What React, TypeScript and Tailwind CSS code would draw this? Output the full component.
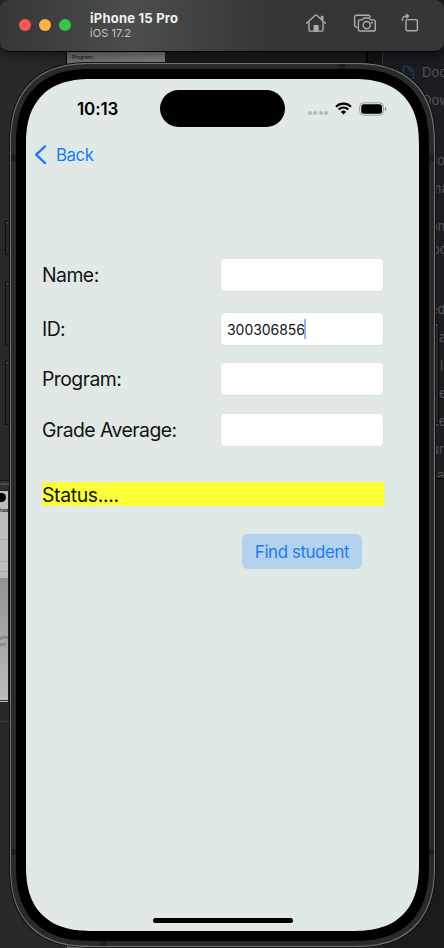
import React from "react";

const Dot = ({ className }: { className: string }) => (
  <span className={`size-3 rounded-full ${className}`} />
);

const HomeIcon = () => (
  <svg width="22" height="20" viewBox="0 0 22 20" fill="none" stroke="#acadad" strokeWidth="1.400" strokeLinecap="round" strokeLinejoin="round">
    <path d="M1.600 10.200 10.200 2.300a1.200 1.200 0 0 1 1.600 0l8.600 7.900" />
    <path d="M3.900 9v7.600a1.500 1.500 0 0 0 1.500 1.500h11.200a1.500 1.500 0 0 0 1.500-1.500V9" />
    <path d="M16.500 6V3.400h1.300v4" />
    <path d="M9.200 18v-5.400h3.800V18z" fill="#acadad" />
  </svg>
);

const CameraIcon = () => (
  <svg width="24" height="20" viewBox="0 0 24 20" fill="none" stroke="#acadad" strokeWidth="1.400" strokeLinecap="round" strokeLinejoin="round">
    <path d="M4 14.200h-.4a2 2 0 0 1-2-2V4.200a2 2 0 0 1 2-2h11.600a2 2 0 0 1 2 1.600" />
    <path d="M7.200 6.900h2.100l1.200-1.500c.2-.3.5-.4.8-.4h4.400c.3 0 .6.1.8.4l1.200 1.500h2.800a1.800 1.800 0 0 1 1.800 1.800v7.500a1.800 1.800 0 0 1-1.800 1.800H7.200a1.800 1.800 0 0 1-1.800-1.800V8.700a1.800 1.800 0 0 1 1.800-1.800z" />
    <circle cx="13.700" cy="12.100" r="3.600" />
    <circle cx="18.900" cy="9.600" r=".4" fill="#acadad" />
  </svg>
);

const RotateIcon = () => (
  <svg width="18" height="20" viewBox="0 0 18 20" fill="none" stroke="#acadad" strokeWidth="1.400" strokeLinecap="round" strokeLinejoin="round">
    <rect x="5" y="6.600" width="11.400" height="11.200" rx="1.400" />
    <path d="M1.300 7.400C1.300 4.600 2.800 3.100 5.200 3.100h1.400" />
    <path d="M5.600 1.500 7.500 3.100 5.600 4.700z" fill="#acadad" />
  </svg>
);

const WifiIcon = () => (
  <svg width="17" height="13" viewBox="0 0 17 13" fill="none" stroke="#000" strokeWidth="2.100">
    <path d="M1 4.700a10.700 10.700 0 0 1 15 0" />
    <path d="M3.700 7.500a6.800 6.800 0 0 1 9.600 0" />
    <path d="M8.500 12.500 5.900 9.900a3.700 3.700 0 0 1 5.200 0z" fill="#000" stroke="none" />
  </svg>
);

const BatteryIcon = () => (
  <svg width="28" height="14" viewBox="0 0 28 14" fill="none">
    <rect x=".6" y=".8" width="24" height="12.400" rx="4" stroke="#999e9d" />
    <rect x="2.200" y="2.300" width="20.900" height="9.400" rx="2.600" fill="#000" />
    <path d="M26 5v4c.8-.3 1.300-1.100 1.300-2S26.800 5.300 26 5z" fill="#858a89" />
  </svg>
);

const Field = ({ label, value, className }: { label: string; value?: string; className: string }) => (
  <div className={`flex h-[34px] items-center justify-between ${className}`}>
    <span className="text-[19.400px] leading-6 tracking-[-0.540px]">{label}</span>
    <div className="flex h-[34px] w-[164px] shrink-0 items-center rounded-[5px] border border-[#dde2e0] bg-white pl-1.5">
      {value && (
        <>
          <span className="text-[14px] tracking-[-0.050px]">{value}</span>
          <span className="-ml-px h-[20px] w-[2px] bg-[#99aefa]" />
        </>
      )}
    </div>
  </div>
);

const SideKey = ({ className }: { className: string }) => (
  <div className={`absolute border border-[#0c0c0c] bg-[#292929] shadow-[inset_0_1px_0_#555] ${className}`} />
);

const Desktop = () => (
  <div className="absolute inset-0 flex bg-[#292929]">
    <div className="w-[382px]">
      <div className="absolute left-0 top-[480px] h-2.5 w-[10px] overflow-hidden border-t border-[#161616] bg-[#303030] text-[3px] leading-[6px] text-[#777]">tudent</div>
      <div className="absolute left-0 top-[490px] h-[213px] w-[9px] overflow-hidden border-y border-r border-[#222] bg-[#bdbdbd]">
        <div className="mt-[2px] h-[9px] w-[6px] rounded-r-full bg-black" />
        <div className="mt-[6px] h-[6px] whitespace-nowrap text-[4px] font-bold leading-[5px] text-[#222]">tuden</div>
        <div className="mt-[25px] h-[22px] border-t border-[#a8a8a8]" />
        <div className="h-[11px] border-y border-[#a8a8a8]" />
        <div className="mt-[6px] h-[118px] bg-linear-to-b from-[#939393] to-[#bababa] pt-[56px] text-[4px] leading-[7px] text-[#555]">
          <div className="whitespace-nowrap">ghts</div>
          <div className="whitespace-nowrap">ent</div>
        </div>
        <div className="mt-1 h-px bg-[#333]" />
      </div>
      <div className="absolute left-0 top-[721px] h-px w-2.5 bg-[#3c3c3c]" />
    </div>
    <div className="w-[62px] border-l border-[#3b3b40] bg-[#1c1c21]" />
    <div className="absolute left-[165px] top-0 h-[80px] w-[203px] border-r-2 border-black bg-[#1d1d1d]" />
    <div className="absolute left-[368px] top-0 h-[80px] w-[14px] bg-[#151515]" />
    <div className="absolute left-[66px] top-[50px] h-[20px] w-[99px] border-l border-black bg-linear-to-r from-[#747877] to-[#838383] pl-[5px] pt-[4px] text-[5px] leading-[7px] text-[#111]">Program:</div>
    <div className="absolute left-[67px] top-[944px] h-1 w-[98px] bg-[#737776]" />
    <div className="absolute left-[382px] top-[478px] h-[470px] w-[62px] border-t border-black bg-[#1a1a1d]" />
    <svg className="absolute left-[402px] top-[65px]" width="13" height="15" viewBox="0 0 13 15" fill="none" stroke="#163e69" strokeWidth="1.200">
      <path d="M1.500 1.500h5.500l4.500 4.500v7.300H1.500zM7 1.500V6h4.500" />
    </svg>
    <div className="absolute left-[422px] top-[62px] w-[22px] overflow-hidden whitespace-nowrap text-[13px] leading-5 text-[#54545a]">Documents</div>
    <div className="absolute left-[422px] top-[90px] w-[22px] overflow-hidden whitespace-nowrap text-[13px] leading-5 text-[#54545a]">Downloads</div>
    <div className="absolute left-[434px] top-0 h-[478px] w-[10px] overflow-hidden text-[13px] leading-5 text-[#54545a]">
      <span className="absolute left-0 top-[150px]">lo</span>
      <span className="absolute -left-1 top-[178px]">ma</span>
      <span className="absolute -left-1 top-[216px]">om</span>
      <span className="absolute -left-0.5 top-[239px]">oc</span>
      <span className="absolute -left-1 top-[299px]">ed</span>
      <span className="absolute left-[5px] top-[327px]">a</span>
      <span className="absolute left-[6px] top-[355px]">lo</span>
      <span className="absolute left-[5px] top-[383px]">e</span>
      <span className="absolute left-[-3px] top-[411px]">ue</span>
      <span className="absolute left-[-3px] top-[439px]">urp</span>
      <span className="absolute left-[3px] top-[465px]">a</span>
    </div>
  </div>
);

export default function App() {
  return (
    <div className="relative h-[948px] w-[444px] overflow-hidden bg-[#292929] font-['Inter','Liberation_Sans',sans-serif] text-[#111414]">
      <Desktop />

      <header className="absolute left-0 top-0 flex h-[51.500px] w-[444px] items-center rounded-[9px] border-b border-black bg-linear-to-r from-[#353737] via-[#4c4e4e] via-30% to-[#353737] to-60% pl-[19px] pr-[25px] shadow-[0_2px_16px_#0009]">
        <div className="flex gap-2">
          <Dot className="bg-[#fe5550]" />
          <Dot className="bg-[#feb43e]" />
          <Dot className="bg-[#32c748]" />
        </div>
        <div className="ml-[19px] flex flex-col pt-px">
          <span className="text-[13px] font-bold leading-[15px] tracking-[0.230px] text-[#f2f2f2]">iPhone 15 Pro</span>
          <span className="text-[11px] leading-[14px] tracking-[0.080px] text-[#c2c2c2]">iOS 17.2</span>
        </div>
        <div className="-mt-1 ml-auto flex items-center">
          <HomeIcon />
          <span className="w-[26px]" />
          <CameraIcon />
          <span className="w-[24px]" />
          <RotateIcon />
        </div>
      </header>

      <SideKey className="left-[5px] top-[221px] h-[34px] w-[8px]" />
      <SideKey className="left-[5px] top-[282px] h-[64px] w-[8px]" />
      <SideKey className="left-[5px] top-[361px] h-[64px] w-[8px]" />
      <SideKey className="left-[431px] top-[323px] h-[101px] w-[8px]" />

      <div className="absolute left-[10px] top-[63px] h-[884px] w-[425px] rounded-[74px] border border-[#747474] bg-[#2a2a2a] p-[5px] shadow-[0_0_0_1px_#111] supports-[corner-shape:squircle]:rounded-[82px] supports-[corner-shape:squircle]:[corner-shape:superellipse(1.3)]">
        <div className="absolute left-0 top-[91px] h-1.5 w-[5px] bg-[#1d1d1d]" />
        <div className="absolute right-0 top-[91px] h-1.5 w-[5px] bg-[#1d1d1d]" />
        <div className="absolute left-0 top-[785px] h-1.5 w-[5px] bg-[#1d1d1d]" />
        <div className="absolute right-0 top-[785px] h-1.5 w-[5px] bg-[#1d1d1d]" />
        <div className="absolute right-[89px] top-0 h-[5px] w-1.5 bg-[#1d1d1d]" />
        <div className="absolute bottom-0 left-[89px] h-[5px] w-1.5 bg-[#1d1d1d]" />

        <div className="h-full rounded-[68px] bg-black p-[10px] supports-[corner-shape:squircle]:rounded-[76px] supports-[corner-shape:squircle]:[corner-shape:superellipse(1.3)]">
          <main className="flex h-full flex-col overflow-hidden rounded-[58px] bg-[#e1e9e7] supports-[corner-shape:squircle]:rounded-[66px] supports-[corner-shape:squircle]:[corner-shape:superellipse(1.3)]">
            <div className="flex h-[59px] shrink-0 items-center">
              <div className="w-[134px] pl-[51px] pt-0.5 text-[17px] font-semibold tracking-[-0.100px] text-black">10:13</div>
              <div className="h-[37px] w-[125px] rounded-full bg-black" />
              <div className="ml-[23px] flex items-center">
                <div className="mt-[9px] flex gap-[1.330px]">
                  <span className="size-[4px] rounded-full bg-[#b3b9b7]" />
                  <span className="size-[4px] rounded-full bg-[#b3b9b7]" />
                  <span className="size-[4px] rounded-full bg-[#b3b9b7]" />
                  <span className="size-[4px] rounded-full bg-[#b3b9b7]" />
                </div>
                <span className="w-[7px]" />
                <WifiIcon />
                <span className="w-[7px]" />
                <BatteryIcon />
              </div>
            </div>

            <div className="flex h-[34px] shrink-0 items-center pl-2 text-[#1a7afe]">
              <svg width="14" height="20" viewBox="0 0 14 20" fill="none" stroke="currentColor" strokeWidth="2.300" strokeLinecap="round" strokeLinejoin="round">
                <path d="M11 1.300 2.200 9.700 11 18.100" />
              </svg>
              <span className="ml-[8px] pt-0.5 text-[16.800px] tracking-[-0.400px]">Back</span>
            </div>

            <div className="pl-4 pr-[35px]">
              <Field label="Name:" className="mt-[86px]" />
              <Field label="ID:" value="300306856" className="mt-[20px]" />
              <Field label="Program:" className="mt-[16px]" />
              <Field label="Grade Average:" className="mt-[17px]" />
              <div className="mt-[35px] h-[24px] bg-[#fcff37] pt-px text-[19.400px] leading-[24px] tracking-[-0.350px] text-[#111400]">Status....</div>
              <button className="ml-[200px] mt-[28px] flex h-[35px] w-[120px] items-center justify-center rounded-[6px] bg-[#b3d2eb] pt-0.5 text-[16.800px] tracking-[-0.360px] text-[#1a7afe]">Find student</button>
            </div>

            <div className="mb-2 mt-auto h-[5px] w-[140px] self-center rounded-full bg-black" />
          </main>
        </div>
      </div>
    </div>
  );
}
